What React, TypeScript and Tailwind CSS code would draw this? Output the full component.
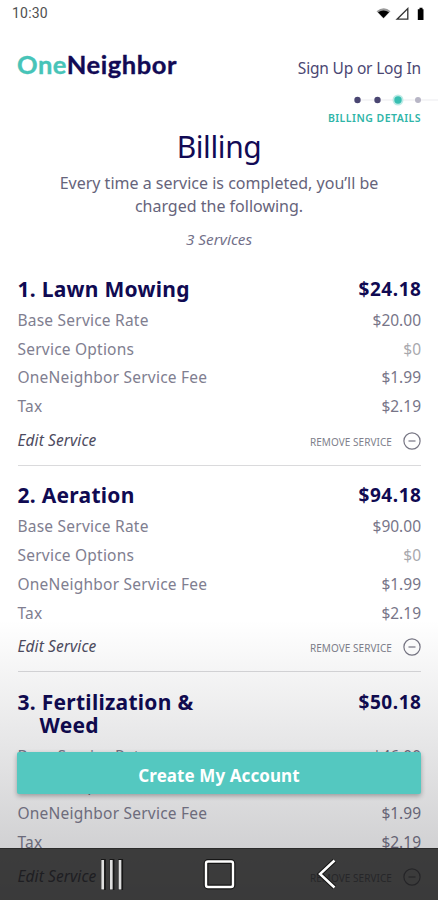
type Service = { title: string; second?: string; total: string; base: string };

const services: Service[] = [
  { title: '1. Lawn Mowing', total: '$24.18', base: '$20.00' },
  { title: '2. Aeration', total: '$94.18', base: '$90.00' },
  { title: '3. Fertilization &', second: 'Weed', total: '$50.18', base: '$46.00' },
];

function StatusBar() {
  return (
    <header className="flex h-[27px] items-center justify-between pl-3 pr-[14px]">
      <span className="font-['Roboto',sans-serif] text-[14px] tracking-[0.2px] text-[#505050]">10:30</span>
      <svg width="48" height="16" viewBox="0 0 48 16" aria-hidden="true">
        <path d="M0.5 5.2Q8 -0.5 14.5 5.2L7.5 12.5Z" fill="#999" />
        <path d="M2 6.3Q7.5 2.6 13 6.3L7.5 12Z" fill="#000" />
        <path d="M21 13.2L31.8 2.5V13.2Z" fill="none" stroke="#333" strokeWidth="1.3" />
        <path d="M42.5 3.2H43.5V1.8H46.5V3.2H47.5V14H41.8V3.2Z" fill="#000" />
      </svg>
    </header>
  );
}

function Row({ label, value, light }: { label: string; value: string; light?: boolean }) {
  return (
    <div className="flex h-[28.7px] items-center justify-between text-[15.5px] text-[#807e90]">
      <span className="tracking-[0.22px]">{label}</span>
      <span className={light ? 'text-[#a8a8ad]' : 'text-[#777588]'}>{value}</span>
    </div>
  );
}

function ServiceSection({ s }: { s: Service }) {
  return (
    <section className="border-b border-[#dadadc] pb-[5px] pt-[18.5px]">
      <div className="mb-[5px] flex justify-between font-bold leading-[23.3px] text-[#100a52]">
        <h2 className="text-[21px] tracking-[0.27px]">
          {s.title}
          {s.second && <span className="block pl-[22px]">{s.second}</span>}
        </h2>
        <span className="text-[19px] tracking-[0.55px] -mr-[0.5px]">{s.total}</span>
      </div>
      <Row label="Base Service Rate" value={s.base} />
      <Row label="Service Options" value="$0" light />
      <Row label="OneNeighbor Service Fee" value="$1.99" />
      <Row label="Tax" value="$2.19" />
      <div className="flex h-[38.8px] items-center justify-between">
        <a className="text-[15.5px] italic tracking-[0.08px] text-[#4d4b60]">Edit Service</a>
        <button className="flex items-center gap-[11px] text-[10px] text-[#807f8c]">
          <span className="pt-[3px] tracking-[0.06px]">REMOVE SERVICE</span>
          <svg width="18" height="18" viewBox="0 0 18 18" fill="none" stroke="#777684" strokeWidth="1.2">
            <circle cx="9" cy="9" r="8.1" />
            <path d="M5.5 9H12.5" />
          </svg>
        </button>
      </div>
    </section>
  );
}

export default function App() {
  return (
    <div className="relative h-[900px] w-[438px] overflow-hidden bg-white font-['Noto_Sans',sans-serif]">
      <StatusBar />
      <div className="flex h-[65px] items-start justify-between pl-[17px] pr-[17px] pt-[20px]">
        <div className="font-['Lato',sans-serif] text-[25.5px] font-bold leading-[34px] tracking-[0.55px] text-[#120a55] [-webkit-text-stroke:0.35px_currentColor]">
          <span className="text-[#47c4b8]">One</span>Neighbor
        </div>
        <a className="pt-[8px] text-[15.5px] leading-[26px] tracking-[-0.18px] text-[#4b4773]">Sign Up or Log In</a>
      </div>
      <div className="flex h-[36px] flex-col items-end">
        <svg width="86" height="16" viewBox="0 0 86 16" aria-hidden="true">
          <path d="M5 8H86" stroke="#ececf0" strokeWidth="1.2" />
          <circle cx="5.5" cy="8" r="3.2" fill="#4a4672" />
          <circle cx="25.5" cy="8" r="3.2" fill="#4a4672" />
          <circle cx="46" cy="8" r="5.5" fill="#bdebe6" />
          <circle cx="46" cy="8" r="3.7" fill="#38bfb2" />
          <circle cx="66" cy="8" r="3" fill="#b7b5c5" />
        </svg>
        <span className="mr-[17px] mt-[3px] text-[10.5px] font-semibold leading-[14px] tracking-[0.47px] text-[#2fb5a8]">BILLING DETAILS</span>
      </div>
      <div className="flex flex-col items-center text-center">
        <h1 className="text-[30px] leading-[38px] tracking-[-0.4px] text-[#120a55]">Billing</h1>
        <p className="mt-[6px] w-[340px] text-[16px] leading-[22.5px] text-[#66647b]">
          Every time a service is completed, you’ll be<br />charged the following.
        </p>
        <p className="mt-[11px] text-[15.3px] italic leading-[22px] text-[#73718a]">3 Services</p>
      </div>
      <main className="mt-[9.6px] pl-[17.5px] pr-[17px]">
        {services.map((s) => (
          <ServiceSection key={s.title} s={s} />
        ))}
      </main>
      <div className="pointer-events-none absolute inset-x-0 bottom-0 h-[280px] bg-linear-to-b from-[#0a0a14]/0 to-[#0a0a14]/23" />
      <button className="absolute left-[17px] top-[752px] h-[42px] w-[404px] rounded-[2px] bg-[#54c8c0] pt-[5px] text-[17px] font-bold tracking-[0.08px] text-white shadow-[0_2px_5px_rgba(0,0,0,0.3)]">
        Create My Account
      </button>
      <nav className="absolute inset-x-0 bottom-0 h-[52px] border-t border-[#2b2b2b] bg-[#161616]/80">
        <svg width="438" height="51" viewBox="0 0 438 51" fill="none" aria-label="Navigation">
          <path d="M103.4 10V41M112 10V41M120.7 10V41" stroke="#161616" strokeWidth="4.8" />
          <path d="M102.7 11V40.5M111.3 11V40.5M120 11V40.5" stroke="#dedede" strokeWidth="2.7" />
          <rect x="206" y="12.5" width="27" height="25.5" rx="2" stroke="#161616" strokeWidth="4.8" />
          <rect x="206" y="12.5" width="27" height="25.5" rx="2" stroke="#fff" strokeWidth="2.4" />
          <path d="M334.5 11.5L320 25L334.5 38.5" stroke="#161616" strokeWidth="4.5" />
          <path d="M334.5 11.5L320 25L334.5 38.5" stroke="#fff" strokeWidth="2.5" />
        </svg>
      </nav>
    </div>
  );
}
